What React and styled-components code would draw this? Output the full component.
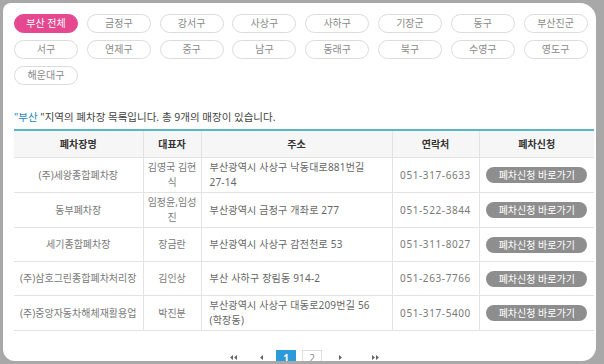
import React from "react";
import styled, { createGlobalStyle } from "styled-components";

const GlobalStyle = createGlobalStyle`
  html, body {
    margin: 0;
    padding: 0;
    background: #a8a8a8;
  }
  body {
    font-family: "Noto Sans", "Noto Sans CJK KR", sans-serif;
    -webkit-font-smoothing: antialiased;
  }
`;

const districts = [
  "부산 전체", "금정구", "강서구", "사상구", "사하구", "기장군", "동구", "부산진군",
  "서구", "연제구", "중구", "남구", "동래구", "북구", "수영구", "영도구",
  "해운대구",
];

const shops = [
  { name: "(주)세왕종합폐차장", owner: "김영국 김현식", addr: "부산광역시 사상구 낙동대로881번길 27-14", tel: "051-317-6633" },
  { name: "동부폐차장", owner: "임정윤,임성진", addr: "부산광역시 금정구 개좌로 277", tel: "051-522-3844" },
  { name: "세기종합폐차장", owner: "장금란", addr: "부산광역시 사상구 감전천로 53", tel: "051-311-8027" },
  { name: "(주)삼호그린종합폐차처리장", owner: "김인상", addr: "부산 사하구 장림동 914-2", tel: "051-263-7766" },
  { name: "(주)중앙자동차해체재활용업", owner: "박진분", addr: "부산광역시 사상구 대동로209번길 56 (학장동)", tel: "051-317-5400" },
];

const Card = styled.div`
  box-sizing: border-box;
  margin: 3px 8px 0 3px;
  height: 358px;
  background: #fff;
  border-radius: 8px 16px 14px 12px;
  padding: 11px 2px 0 11px;
`;

const ChipGrid = styled.div`
  display: grid;
  grid-template-columns: repeat(8, 64px);
  grid-auto-rows: 19px;
  column-gap: 8.8px;
  row-gap: 7px;
`;

const Chip = styled.button`
  box-sizing: border-box;
  height: 19px;
  padding: 0;
  border-radius: 10px;
  border: 1px solid ${(p) => (p.$active ? "#e5488f" : "#dcdcdc")};
  background: ${(p) => (p.$active ? "#e5488f" : "#fff")};
  color: ${(p) => (p.$active ? "#fff" : "#8a8a8a")};
  font-family: inherit;
  font-size: 10px;
  line-height: 17px;
  cursor: pointer;
`;

const Notice = styled.p`
  margin: 25px 0 5px 0;
  font-size: 10.5px;
  line-height: 14px;
  color: #444;
`;

const Place = styled.span`
  color: #1e88c2;
`;

const Table = styled.table`
  width: 580px;
  border-collapse: collapse;
  table-layout: fixed;
  border-top: 2px solid #5ab6c6;
  font-size: 10px;
  line-height: 15px;
`;

const Th = styled.th`
  height: 26px;
  padding: 0;
  background: #f6f6f6;
  color: #333;
  font-weight: bold;
  text-align: center;
  border-bottom: 1px solid #e3e3e3;
  & + & {
    border-left: 1px solid #e3e3e3;
  }
`;

const Td = styled.td`
  height: 29px;
  padding: 2px ${(p) => p.$pad ?? 4}px;
  color: ${(p) => p.$color || "#7a7a7a"};
  text-align: ${(p) => p.$align || "center"};
  letter-spacing: ${(p) => p.$spacing || 0}px;
  vertical-align: middle;
  border-bottom: 1px solid #e3e3e3;
  & + & {
    border-left: 1px solid #e3e3e3;
  }
`;

const Word = styled.span`
  white-space: nowrap;
`;

const ApplyButton = styled.button`
  display: block;
  margin: 0 auto;
  width: 101px;
  height: 16px;
  padding: 0;
  border: 0;
  border-radius: 8px;
  background: #8e8e8e;
  color: #fff;
  font-family: inherit;
  font-size: 10px;
  line-height: 16px;
  letter-spacing: 0;
  cursor: pointer;
`;

const Pager = styled.nav`
  width: 580px;
  margin-top: 19px;
  display: flex;
  justify-content: center;
  align-items: center;
`;

const PageArrow = styled.span`
  width: 20px;
  height: 15px;
  display: flex;
  align-items: center;
  justify-content: center;
  margin-right: ${(p) => p.$after || 0}px;
`;

const PageNum = styled.span`
  box-sizing: border-box;
  width: 20px;
  height: 15px;
  display: flex;
  align-items: center;
  justify-content: center;
  margin-right: ${(p) => p.$after || 0}px;
  font-size: 10px;
  border: 1px solid ${(p) => (p.$current ? "#2b9ad8" : "#dcdcdc")};
  background: ${(p) => (p.$current ? "#2b9ad8" : "#fff")};
  color: ${(p) => (p.$current ? "#fff" : "#888")};
  font-weight: ${(p) => (p.$current ? "bold" : "normal")};
`;

const Arrow = ({ dir, double }) => {
  const tri = (x) =>
    dir === "left"
      ? `M${x + 3} 0 L${x} 2.5 L${x + 3} 5 Z`
      : `M${x} 0 L${x + 3} 2.5 L${x} 5 Z`;
  return (
    <svg width={double ? 7 : 3} height="5" viewBox={`0 0 ${double ? 7 : 3} 5`}>
      <path d={tri(0)} fill="#666" />
      {double && <path d={tri(4)} fill="#666" />}
    </svg>
  );
};

// keep each address word together, wrap only at spaces
const Address = ({ text }) =>
  text.split(" ").map((w, i) => (
    <React.Fragment key={i}>
      {i > 0 && " "}
      <Word>{w}</Word>
    </React.Fragment>
  ));

export default function App() {
  return (
    <>
      <GlobalStyle />
      <Card>
        <ChipGrid>
          {districts.map((d, i) => (
            <Chip key={d} $active={i === 0}>
              {d}
            </Chip>
          ))}
        </ChipGrid>

        <Notice>
          <Place>"부산 </Place>"지역의 폐차장 목록입니다. 총 9개의 매장이 있습니다.
        </Notice>

        <Table>
          <colgroup>
            <col style={{ width: 129 }} />
            <col style={{ width: 58 }} />
            <col style={{ width: 191 }} />
            <col style={{ width: 87 }} />
            <col style={{ width: 115 }} />
          </colgroup>
          <thead>
            <tr>
              <Th>폐차장명</Th>
              <Th>대표자</Th>
              <Th>주소</Th>
              <Th>연락처</Th>
              <Th>폐차신청</Th>
            </tr>
          </thead>
          <tbody>
            {shops.map((s) => (
              <tr key={s.name}>
                <Td>{s.name}</Td>
                <Td $pad={2}>{s.owner}</Td>
                <Td $align="left" $pad={8} $color="#666" $spacing={0.2}>
                  <Address text={s.addr} />
                </Td>
                <Td $spacing={0.6}>{s.tel}</Td>
                <Td>
                  <ApplyButton>폐차신청 바로가기</ApplyButton>
                </Td>
              </tr>
            ))}
          </tbody>
        </Table>

        <Pager>
          <PageArrow $after={8}>
            <Arrow dir="left" double />
          </PageArrow>
          <PageArrow $after={5}>
            <Arrow dir="left" />
          </PageArrow>
          <PageNum $current $after={6}>1</PageNum>
          <PageNum $after={8}>2</PageNum>
          <PageArrow $after={15}>
            <Arrow dir="right" />
          </PageArrow>
          <PageArrow>
            <Arrow dir="right" double />
          </PageArrow>
        </Pager>
      </Card>
    </>
  );
}
